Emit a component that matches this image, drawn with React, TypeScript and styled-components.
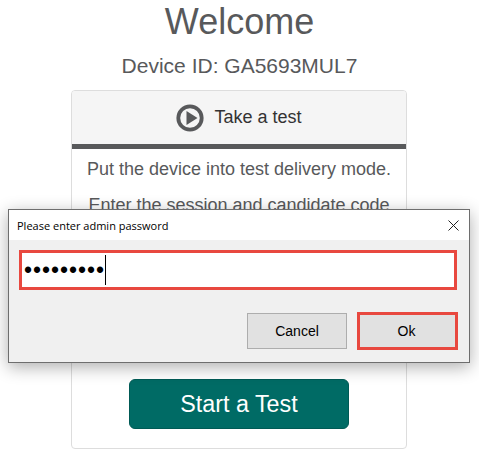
import styled, { createGlobalStyle } from "styled-components";

const GlobalStyle = createGlobalStyle`
  html, body {
    margin: 0;
    padding: 0;
    background: #fff;
    overflow: hidden;
  }
`;

export default function App() {
  return (
    <Page>
      <GlobalStyle />
      <Title>Welcome</Title>
      <DeviceId>Device ID: GA5693MUL7</DeviceId>
      <Card>
        <CardHeader>
          <PlayIcon />
          <HeaderText>Take a test</HeaderText>
        </CardHeader>
        <CardBody>
          <BodyLine>Put the device into test delivery mode.</BodyLine>
          <BodyLine>Enter the session and candidate code</BodyLine>
          <StartButton>Start a Test</StartButton>
        </CardBody>
      </Card>
      <Dialog>
        <DialogTitleBar>
          <DialogTitle>Please enter admin password</DialogTitle>
          <CloseIcon />
        </DialogTitleBar>
        <DialogBody>
          <PasswordField>
            <Dots>•••••••••</Dots>
            <Caret />
          </PasswordField>
          <DialogActions>
            <DialogButton>Cancel</DialogButton>
            <DialogButton highlighted>Ok</DialogButton>
          </DialogActions>
        </DialogBody>
      </Dialog>
    </Page>
  );
}

function PlayIcon() {
  return (
    <svg width="28" height="28" viewBox="0 0 28 28">
      <circle cx="14" cy="14" r="11.7" fill="none" stroke="#58595b" strokeWidth="3.8" />
      <path d="M10.5 7 L21.5 14 L10.5 21 Z" fill="#58595b" />
    </svg>
  );
}

function CloseIcon() {
  return (
    <svg width="11" height="11" viewBox="0 0 11 11">
      <path d="M0.5 0.5 L10.5 10.5 M10.5 0.5 L0.5 10.5" stroke="#222" strokeWidth="1" fill="none" />
    </svg>
  );
}

const Page = styled.div`
  position: relative;
  width: 479px;
  height: 457px;
  overflow: hidden;
  display: flex;
  flex-direction: column;
  align-items: center;
  font-family: "Liberation Sans", Arial, sans-serif;
  color: #58595b;
`;

const Title = styled.h1`
  margin: 0;
  height: 53px;
  font-size: 36px;
  line-height: 43px;
  font-weight: 400;
  text-align: center;
`;

const DeviceId = styled.div`
  height: 37px;
  font-size: 21px;
  line-height: 26px;
  text-align: center;
`;

const Card = styled.div`
  width: 336px;
  height: 359px;
  margin-right: 1px;
  box-sizing: border-box;
  flex-shrink: 0;
  border: 1px solid #ddd;
  border-radius: 4px;
  display: flex;
  flex-direction: column;
`;

const CardHeader = styled.div`
  height: 53px;
  box-sizing: content-box;
  background: #f5f5f5;
  border-bottom: 5px solid #58595b;
  border-radius: 3px 3px 0 0;
  display: flex;
  align-items: center;
  justify-content: center;
  gap: 10px;
`;

const HeaderText = styled.span`
  font-size: 18px;
  color: #333;
`;

const CardBody = styled.div`
  flex: 1;
  display: flex;
  flex-direction: column;
  align-items: center;
  padding-top: 10px;
`;

const BodyLine = styled.p`
  margin: 0 0 16px;
  font-size: 18px;
  line-height: 20px;
  text-align: center;
  white-space: nowrap;
`;

const StartButton = styled.button`
  width: 220px;
  height: 50px;
  margin-top: 148px;
  background: #006b65;
  border: 1px solid #005a55;
  border-radius: 6px;
  color: #fff;
  font-family: inherit;
  font-size: 23.3px;
`;

const Dialog = styled.div`
  position: absolute;
  left: 8px;
  top: 209px;
  width: 462px;
  height: 154px;
  box-sizing: border-box;
  border: 1px solid #6e6e6e;
  background: #f0f0f0;
  box-shadow: 0 4px 16px rgba(0, 0, 0, 0.32);
  display: flex;
  flex-direction: column;
  font-family: "Open Sans", "Noto Sans", sans-serif;
  color: #000;
`;

const DialogTitleBar = styled.div`
  height: 30px;
  flex-shrink: 0;
  background: #fff;
  display: flex;
  align-items: center;
  justify-content: space-between;
  padding: 0 10px 0 8px;
`;

const DialogTitle = styled.span`
  font-size: 11px;
`;

const DialogBody = styled.div`
  flex: 1;
  display: flex;
  flex-direction: column;
  padding: 10px 11px 12px 10px;
`;

const PasswordField = styled.div`
  width: 438px;
  height: 40px;
  box-sizing: border-box;
  border: 3px solid #e8483f;
  background: #fff;
  display: flex;
  align-items: center;
  padding-left: 2px;
`;

const Dots = styled.span`
  font-family: "Liberation Sans", Arial, sans-serif;
  font-size: 23px;
  line-height: 30px;
  letter-spacing: 0.95px;
`;

const Caret = styled.span`
  width: 1px;
  height: 30px;
  background: #000;
`;

const DialogActions = styled.div`
  margin-top: 22px;
  display: flex;
  justify-content: flex-end;
  align-items: center;
  gap: 10px;
`;

const DialogButton = styled.button<{ highlighted?: boolean }>`
  width: ${props => (props.highlighted ? "101px" : "100px")};
  height: ${props => (props.highlighted ? "38px" : "36px")};
  padding: 0 ${props => (props.highlighted ? "2px" : "0")} 0 0;
  box-sizing: border-box;
  background: #e1e1e1;
  border: ${props => (props.highlighted ? "3px solid #e8483f" : "1px solid #adadad")};
  color: #000;
  font-family: "Liberation Sans", Arial, sans-serif;
  font-size: 14px;
`;
